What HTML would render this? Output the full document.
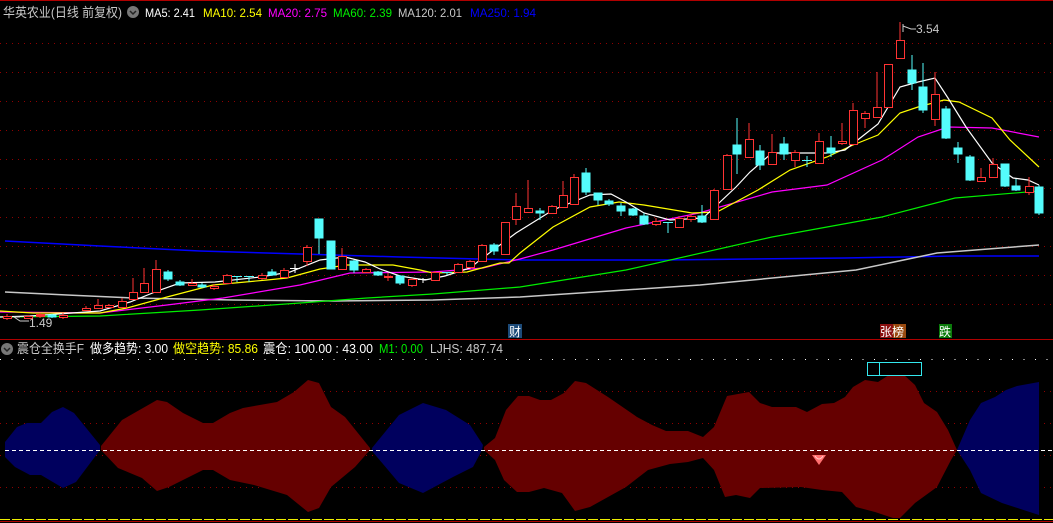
<!DOCTYPE html>
<html><head><meta charset="utf-8"><style>
html,body{margin:0;padding:0;background:#000;width:1053px;height:523px;overflow:hidden}
svg{display:block}
text{font-family:"Liberation Sans","Noto Sans CJK SC",sans-serif;font-size:12px}
</style></head><body>
<svg width="1053" height="523" viewBox="0 0 1053 523" xmlns="http://www.w3.org/2000/svg">
<rect width="1053" height="523" fill="#000"/>
<line x1="0" y1="0.5" x2="1053" y2="0.5" stroke="#b00000"/>
<g stroke="#900000" stroke-dasharray="1 5">
<line x1="0" y1="43.5" x2="1053" y2="43.5"/><line x1="0" y1="72.5" x2="1053" y2="72.5"/>
<line x1="0" y1="101.5" x2="1053" y2="101.5"/><line x1="0" y1="130.5" x2="1053" y2="130.5"/>
<line x1="0" y1="159.5" x2="1053" y2="159.5"/><line x1="0" y1="188.5" x2="1053" y2="188.5"/>
<line x1="0" y1="217.5" x2="1053" y2="217.5"/><line x1="0" y1="246.5" x2="1053" y2="246.5"/>
<line x1="0" y1="275.5" x2="1053" y2="275.5"/><line x1="0" y1="304.5" x2="1053" y2="304.5"/>
</g>
<g fill="none" stroke-width="1.2">
<polyline stroke="#0000ff" stroke-width="1.5" points="5,241 100,246 200,251 300,254 400,257 520,260 663,260 845,258 955,256 1039,256"/>
<polyline stroke="#c8c8c8" stroke-width="1.5" points="5,292 67,295 133,298 233,300 333,301 433,300 520,297 700,285 856,270 937,253 1039,245"/>
<polyline stroke="#00ee00" points="0,317 100,316 200,310 300,303 367,298 433,294 520,287 626,270 772,237 882,217 955,198 1039,191"/>
<polyline stroke="#ff00ff" points="0,312 100,313 167,305 223,298 300,285 350,273 433,272 483,268 520,259 553,250 626,228 699,213 772,192 827,185 882,160 918,137 948,127 992,128 1039,137"/>
<polyline stroke="#ffff00" points="0,311 33,313 100,313 127,308 167,297 213,285 267,280 287,278 320,269 347,265 393,265 420,270 433,273 467,272 500,263 509,263 520,253 553,227 590,207 619,202 644,205 692,213 717,212 758,190 790,170 827,157 853,145 878,135 900,113 918,107 944,100 959,102 992,118 1010,140 1039,167"/>
<polyline stroke="#ffffff" points="0,317 30,316 100,311 130,302 160,290 180,283 215,282 260,277 290,272 320,260 345,257 365,262 380,269 400,276 425,280 445,276 470,268 480,260 516,233 553,210 590,195 611,194 626,202 644,213 670,220 703,218 736,187 750,172 772,153 801,153 827,153 845,150 864,135 878,124 900,87 918,82 935,78 948,98 966,127 992,163 1013,178 1028,180 1039,185"/>
</g>
<g stroke="#ff3333" fill="#000">
<path d="M7,314V320M28,315V319M40,313V318M63,313V319M86,306V311M98,299V309M109,304V308M122,298V308M133,278V300M144,268V293M156,260V293M192,279V286M214,284V290M227,274V284M262,273V280M284,268V278M307,245V266M342,248V270M366,268V273M388,273V281M412,278V287M435,271V281M458,263V273M470,260V268M482,244V262M505,222V255M516,193V225M528,180V213M552,205V214M563,181V208M574,174V205M656,218V226M679,216V228M691,214V222M714,189V220M727,154V190M749,123V158M772,134V165M795,150V167M819,133V164M842,123V145M853,103V145M865,111V128M877,72V118M888,64V108M900,22V59M935,72V126M981,168V182M993,158V178M1029,177V195"/>
<g>
<rect x="3.5" y="316.5" width="8" height="2"/><rect x="24.5" y="316.5" width="8" height="2"/><rect x="36.5" y="314.5" width="8" height="2" fill="#ff3333"/><rect x="59.5" y="315.5" width="8" height="2"/>
<rect x="82.5" y="308.5" width="8" height="2"/><rect x="94.5" y="305.5" width="8" height="3"/><rect x="105.5" y="305.5" width="8" height="2"/><rect x="118.5" y="301.5" width="8" height="6"/>
<rect x="129.5" y="292.5" width="8" height="7"/><rect x="140.5" y="283.5" width="8" height="9"/><rect x="152.5" y="269.5" width="8" height="23"/>
<rect x="188.5" y="283.5" width="8" height="2"/><rect x="210.5" y="286.5" width="8" height="2"/><rect x="223.5" y="275.5" width="8" height="8"/>
<rect x="258.5" y="275.5" width="8" height="3"/><rect x="280.5" y="270.5" width="8" height="7"/><rect x="303.5" y="247.5" width="8" height="14"/>
<rect x="338.5" y="256.5" width="8" height="13"/><rect x="362.5" y="269.5" width="8" height="3"/><rect x="384.5" y="276.5" width="8" height="1"/>
<rect x="408.5" y="279.5" width="8" height="6"/><rect x="431.5" y="272.5" width="8" height="8"/><rect x="454.5" y="264.5" width="8" height="8"/>
<rect x="466.5" y="261.5" width="8" height="6"/><rect x="478.5" y="245.5" width="8" height="16"/><rect x="501.5" y="222.5" width="8" height="32"/>
<rect x="512.5" y="206.5" width="8" height="13"/><rect x="524.5" y="208.5" width="8" height="4"/><rect x="548.5" y="206.5" width="8" height="7"/>
<rect x="559.5" y="195.5" width="8" height="12"/><rect x="570.5" y="177.5" width="8" height="27"/><rect x="652.5" y="221.5" width="8" height="3"/>
<rect x="675.5" y="218.5" width="8" height="9"/><rect x="687.5" y="216.5" width="8" height="3"/><rect x="710.5" y="190.5" width="8" height="29"/>
<rect x="723.5" y="155.5" width="8" height="34"/><rect x="745.5" y="139.5" width="8" height="18"/><rect x="768.5" y="152.5" width="8" height="12"/>
<rect x="791.5" y="152.5" width="8" height="8"/><rect x="815.5" y="141.5" width="8" height="22"/><rect x="838.5" y="141.5" width="8" height="2"/>
<rect x="849.5" y="110.5" width="8" height="34"/><rect x="861.5" y="113.5" width="8" height="5"/><rect x="873.5" y="107.5" width="8" height="10"/>
<rect x="884.5" y="64.5" width="8" height="43"/><rect x="896.5" y="40.5" width="8" height="18"/><rect x="931.5" y="94.5" width="8" height="25"/>
<rect x="977.5" y="177.5" width="8" height="4"/><rect x="989.5" y="164.5" width="8" height="13"/><rect x="1025.5" y="186.5" width="8" height="6"/>
</g></g>
<g stroke="#54fcfc" fill="#54fcfc">
<path d="M52,314V318M168,270V281M180,280V286M202,283V288M237,276V282M249,276V282M272,269V276M319,219V254M331,241V269M354,260V273M378,271V276M400,275V285M447,272V275M494,243V255M540,208V220M586,168V195M598,193V205M609,199V206M621,203V216M633,208V216M644,213V225M668,222V233M702,205V223M737,118V174M760,145V170M784,137V160M807,156V167M831,136V157M912,55V90M923,63V113M946,106V139M958,142V163M970,155V181M1005,164V187M1016,179V191M1039,185V215"/>
<path stroke-width="1" d="M232,276.5H242M244,276.5H254M442,272.5H452M802,160.5H812M663,222.5H673"/>
<rect x="48" y="315" width="8" height="2"/><rect x="164" y="272" width="8" height="7"/><rect x="176" y="282" width="8" height="3"/>
<rect x="198" y="285" width="8" height="2"/><rect x="268" y="272" width="8" height="3"/><rect x="315" y="219" width="8" height="19"/>
<rect x="327" y="241" width="8" height="28"/><rect x="350" y="261" width="8" height="9"/><rect x="374" y="272" width="8" height="3"/>
<rect x="396" y="276" width="8" height="7"/><rect x="490" y="245" width="8" height="6"/><rect x="536" y="211" width="8" height="2"/>
<rect x="582" y="173" width="8" height="19"/><rect x="594" y="193" width="8" height="7"/><rect x="605" y="201" width="8" height="3"/>
<rect x="617" y="206" width="8" height="5"/><rect x="629" y="209" width="8" height="6"/><rect x="640" y="216" width="8" height="8"/>
<rect x="698" y="216" width="8" height="6"/><rect x="733" y="145" width="8" height="9"/><rect x="756" y="151" width="8" height="14"/>
<rect x="780" y="144" width="8" height="10"/><rect x="827" y="148" width="8" height="5"/><rect x="908" y="70" width="8" height="13"/>
<rect x="919" y="87" width="8" height="23"/><rect x="942" y="109" width="8" height="29"/><rect x="954" y="148" width="8" height="6"/>
<rect x="966" y="157" width="8" height="23"/><rect x="1001" y="164" width="8" height="22"/><rect x="1012" y="186" width="8" height="4"/>
<rect x="1035" y="187" width="8" height="26"/>
</g>
<path stroke="#fff" d="M290,268.5H300M295,264V273M418,279.5H428M423,278V283" />
<path d="M903,24 L903,32 M903,26 L911,29 L916,29" stroke="#ccc" fill="none"/>
<text x="916" y="33" fill="#c8c8c8">3.54</text>
<path d="M14,317 L20,317 M14,317 L20,321 L29,321" stroke="#ccc" fill="none"/>
<text x="29" y="327" fill="#c8c8c8">1.49</text>
<rect x="508" y="324" width="14" height="14" fill="#1c4a78"/><text x="509" y="336" fill="#fff">财</text>
<rect x="880" y="324" width="13" height="14" fill="#8a1010"/><rect x="893" y="324" width="13" height="14" fill="#9a4a10"/><text x="880" y="336" fill="#fff">张榜</text>
<rect x="939" y="324" width="13" height="14" fill="#0a7a0a"/><text x="939" y="336" fill="#fff">跌</text>
<g style="font-size:13px" lengthAdjust="spacingAndGlyphs">
<text x="3" y="17" fill="#c8c8c8" textLength="119" lengthAdjust="spacingAndGlyphs" style="font-size:13px">华英农业(日线 前复权)</text>
<text x="145" y="17" fill="#fff" textLength="50" lengthAdjust="spacingAndGlyphs">MA5: 2.41</text>
<text x="203" y="17" fill="#ffff00" textLength="59" lengthAdjust="spacingAndGlyphs">MA10: 2.54</text>
<text x="268" y="17" fill="#ff00ff" textLength="59" lengthAdjust="spacingAndGlyphs">MA20: 2.75</text>
<text x="333" y="17" fill="#00ee00" textLength="59" lengthAdjust="spacingAndGlyphs">MA60: 2.39</text>
<text x="398" y="17" fill="#c8c8c8" textLength="64" lengthAdjust="spacingAndGlyphs">MA120: 2.01</text>
<text x="470" y="17" fill="#0000ff" textLength="66" lengthAdjust="spacingAndGlyphs">MA250: 1.94</text>
</g>
<circle cx="133" cy="12" r="6" fill="#777"/><path d="M130,11 L133,14 L136,11" stroke="#222" fill="none" stroke-width="1.5"/>
<line x1="0" y1="339.5" x2="1053" y2="339.5" stroke="#b00000"/>
<circle cx="7" cy="349" r="6" fill="#777"/><path d="M4,348 L7,351 L10,348" stroke="#222" fill="none" stroke-width="1.5"/>
<g style="font-size:13px">
<text x="17" y="353" fill="#c8c8c8" textLength="67" lengthAdjust="spacingAndGlyphs" style="font-size:13px">震仓全换手F</text>
<text x="90" y="353" fill="#fff" textLength="78" lengthAdjust="spacingAndGlyphs" style="font-size:13px">做多趋势: 3.00</text>
<text x="173" y="353" fill="#ffff00" textLength="85" lengthAdjust="spacingAndGlyphs" style="font-size:13px">做空趋势: 85.86</text>
<text x="263" y="353" fill="#fff" textLength="110" lengthAdjust="spacingAndGlyphs" style="font-size:13px">震仓: 100.00 : 43.00</text>
<text x="379" y="353" fill="#00ee00" textLength="44" lengthAdjust="spacingAndGlyphs" style="font-size:13px">M1: 0.00</text>
<text x="430" y="353" fill="#c8c8c8" textLength="73" lengthAdjust="spacingAndGlyphs" style="font-size:13px">LJHS: 487.74</text>
</g>
<line x1="0" y1="359.5" x2="1053" y2="359.5" stroke="#fff" stroke-dasharray="1 10.5"/>
<g stroke="#900000" stroke-dasharray="1 5">
<line x1="0" y1="391.5" x2="1053" y2="391.5"/><line x1="0" y1="423.5" x2="1053" y2="423.5"/>
<line x1="0" y1="455.5" x2="1053" y2="455.5"/><line x1="0" y1="487.5" x2="1053" y2="487.5"/>
</g>
<g stroke="none">
<polygon fill="#00005e" points="5,442 17,427 27,423 41,423 52,412 63,407 74,413 100,445 100,450 76,482 63,488 41,475 30,475 15,467 5,457"/>
<polygon fill="#650000" points="101,446 122,420 157,400 167,402 183,413 203,423 213,423 230,413 243,408 277,402 294,392 308,380 319,383 331,407 345,417 370,448 370,450 355,467 331,487 319,508 308,512 287,495 254,485 230,480 213,470 203,470 189,477 169,487 157,491 142,478 118,468 101,450"/>
<polygon fill="#00005e" points="372,448 399,415 423,403 446,410 470,425 483,445 482,450 473,467 453,477 423,493 399,483 372,451"/>
<polygon fill="#650000" points="484,447 495,438 506,410 518,396 529,396 540,400 551,400 564,393 575,381 586,383 608,397 637,417 652,425 666,431 688,431 703,437 714,427 727,396 749,392 760,403 772,407 796,407 807,412 822,404 834,403 845,397 853,387 865,380 878,382 889,375 904,375 915,385 924,403 937,412 948,430 957,450 951,460 937,487 915,503 900,518 893,518 875,512 856,507 842,492 822,490 801,487 760,488 750,498 736,495 725,497 714,470 703,458 688,462 670,464 648,470 626,487 590,507 575,511 562,493 544,488 529,492 517,492 504,480 495,460 484,450"/>
<polygon fill="#00005e" points="957,450 970,420 981,403 995,397 1006,390 1017,386 1039,382 1039,515 1002,503 981,493 970,470"/>
</g>
<line x1="5" y1="450.5" x2="1053" y2="450.5" stroke="#fff" stroke-dasharray="4 3"/>
<path d="M812,455 L826,455 L819,465 Z" fill="#ff7070"/><path d="M815,456 Q819,462 823,456" stroke="#ffd0d0" fill="none"/>
<rect x="867.5" y="362.5" width="54" height="13" fill="none" stroke="#33e8ee"/><line x1="879.5" y1="362" x2="879.5" y2="376" stroke="#33e8ee"/>
<line x1="0" y1="519.5" x2="1053" y2="519.5" stroke="#eeee00" stroke-dasharray="10 2"/>
<line x1="0" y1="521.5" x2="1053" y2="521.5" stroke="#b00000"/>
</svg>
</body></html>
